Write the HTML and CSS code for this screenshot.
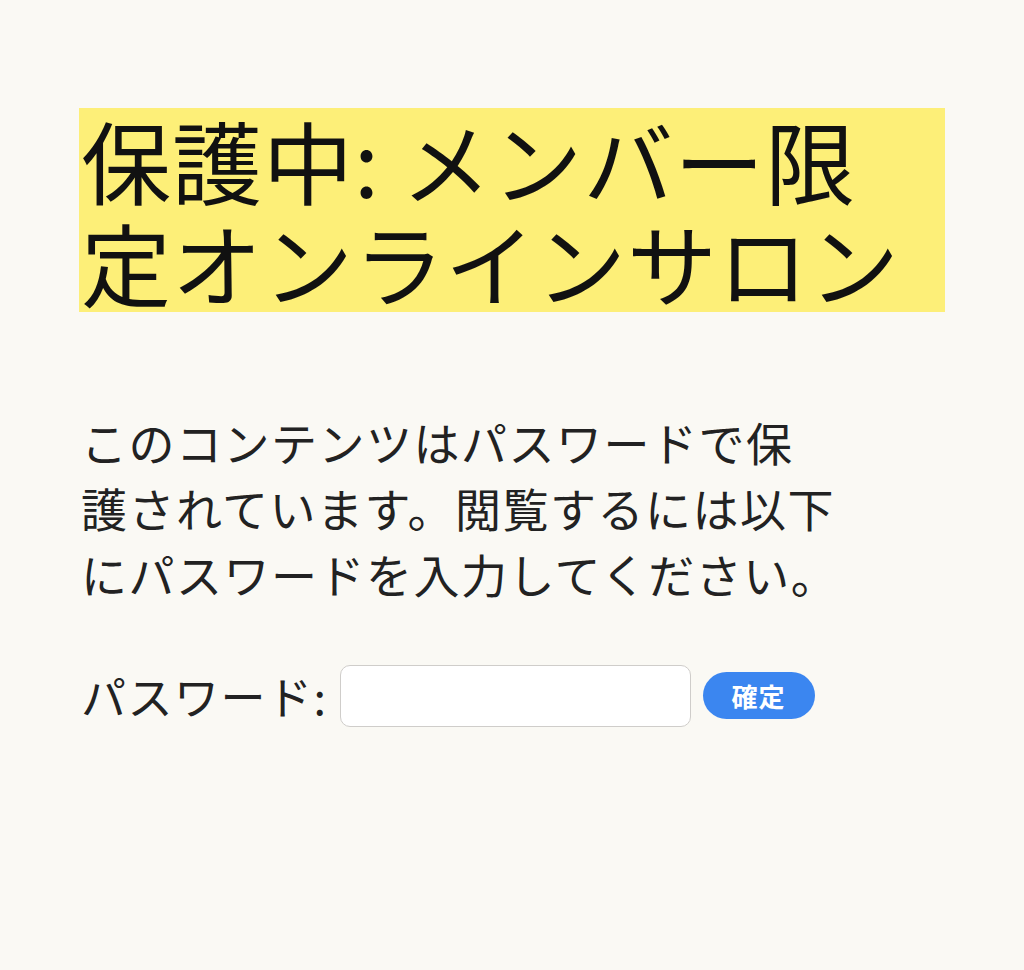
FILE: index.html
```html
<!DOCTYPE html>
<html lang="ja">
<head>
    <meta charset="UTF-8">
    <meta name="viewport" content="width=device-width, initial-scale=1.0">
    <title>保護中: メンバー限定オンラインサロン</title>
    <link rel="stylesheet" href="styles.css">
</head>
<body>

<main class="page">
    <h1 class="entry-title">保護中: メンバー限定オンラインサロン</h1>

    <form class="post-password-form" onsubmit="return false;">
        <p class="notice">このコンテンツはパスワードで保<br>護されています。閲覧するには以下<br>にパスワードを入力してください。</p>
        <p class="field">
            <label for="pwbox">パスワード:</label>
            <input type="password" id="pwbox" name="post_password">
            <button type="submit" class="submit-button">確定</button>
        </p>
    </form>
</main>

</body>
</html>
```

FILE: styles.css
```css
body {
    font-family: "Noto Sans CJK JP", "Noto Sans", sans-serif;
    background-color: #faf9f4;
    color: #1a1a1a;
    margin: 0;
    padding: 0;
}
.page {
    padding: 108px 0 0 79px;
}
.entry-title {
    width: 866px;
    margin: 0;
    padding: 0 0 0 2px;
    box-sizing: border-box;
    background-color: #fdef78;
    color: #111;
    font-size: 90px;
    font-weight: 400;
    line-height: 102px;
    letter-spacing: 1px;
}
.post-password-form {
    margin-top: 96px;
}
.notice {
    width: 860px;
    margin: 0;
    padding-left: 2px;
    font-size: 46px;
    line-height: 66px;
    letter-spacing: 1.5px;
    color: #222;
}
.field {
    display: flex;
    align-items: center;
    margin: 57px 0 0;
    padding-left: 2px;
}
.field label {
    font-size: 45px;
    letter-spacing: 1.5px;
    color: #222;
}
.field input {
    width: 351px;
    height: 62px;
    box-sizing: border-box;
    margin-left: 12px;
    border: 1px solid #cfcdca;
    border-radius: 10px;
    background-color: #fff;
    font-size: 24px;
    padding: 0 12px;
}
.submit-button {
    width: 112px;
    height: 47px;
    margin-left: 12px;
    border: none;
    border-radius: 24px;
    background-color: #3b86f0;
    color: #fff;
    font-family: "Noto Sans CJK JP", sans-serif;
    font-size: 26px;
    font-weight: 700;
    letter-spacing: 1px;
    line-height: 1;
    cursor: pointer;
}
```
